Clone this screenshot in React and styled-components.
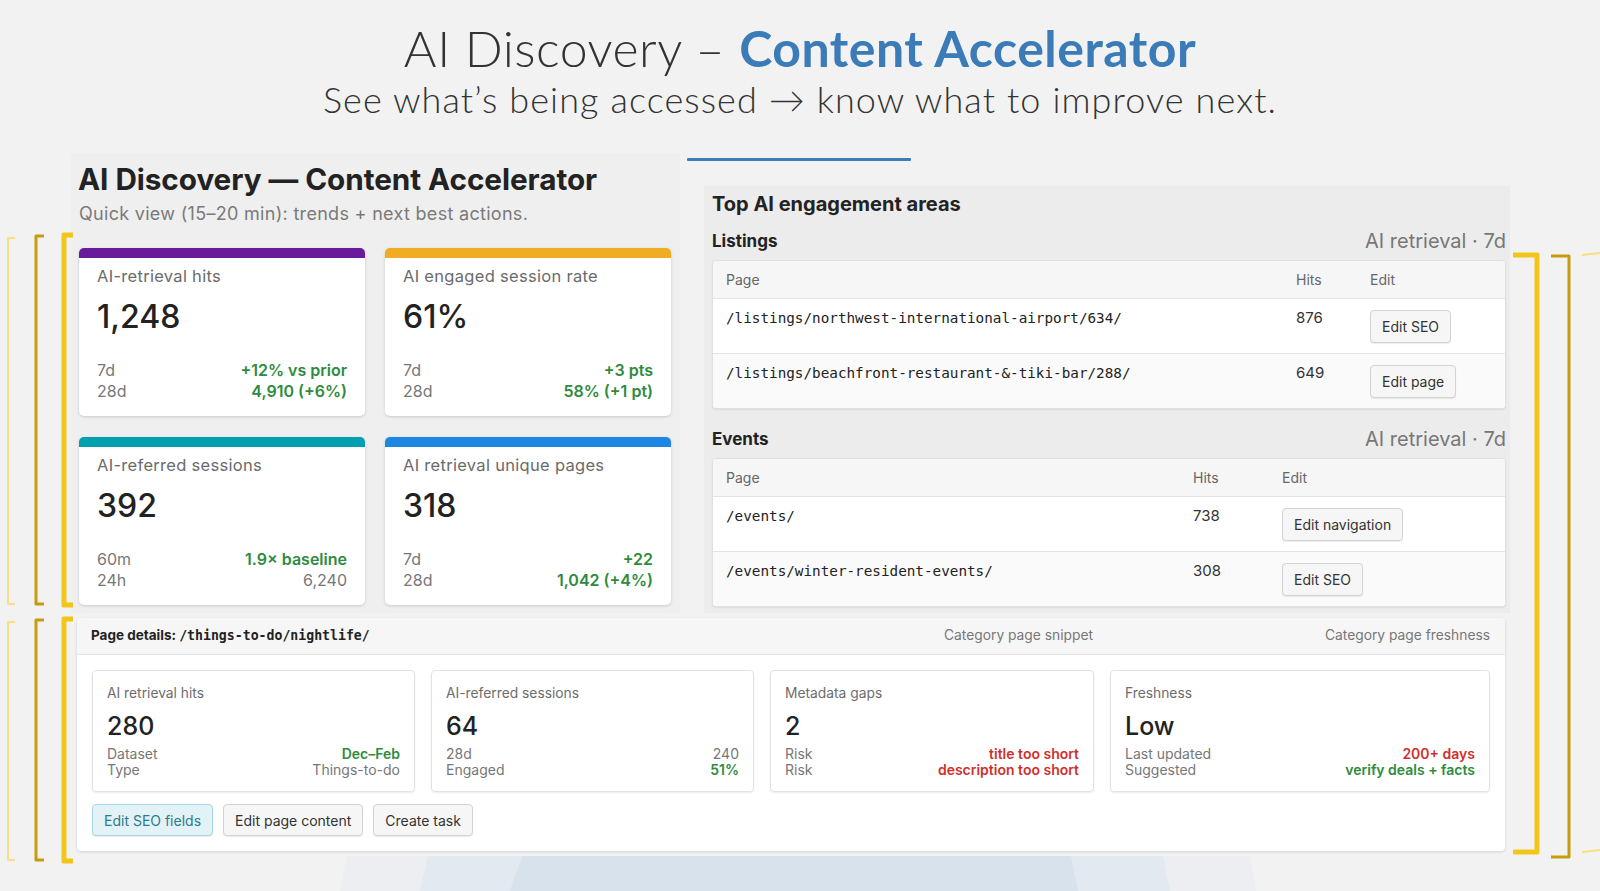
import React from "react";
import styled, { createGlobalStyle } from "styled-components";

const Global = createGlobalStyle`
  html, body { margin: 0; padding: 0; background: #f2f2f2; }
  body { font-family: Inter, "Liberation Sans", Arial, sans-serif; color: #222; }
  * { box-sizing: border-box; }
`;

const Page = styled.div`
  position: relative;
  width: 1600px;
  height: 891px;
  overflow: hidden;
  background: #f2f2f2;
`;

const Decor = styled.svg`
  position: absolute;
  left: 0;
  top: 0;
  width: 1600px;
  height: 891px;
  pointer-events: none;
  z-index: ${(p) => (p.$front ? 5 : 0)};
`;

const Header = styled.header`
  position: relative;
  z-index: 1;
  text-align: center;
  padding-top: 17px;
  height: 153px;
`;

const Title = styled.h1`
  margin: 0;
  font-family: Lato, "Liberation Sans", sans-serif;
  font-weight: 300;
  font-size: 50px;
  line-height: 62px;
  color: #333;
  letter-spacing: 0.5px;
`;

const Accent = styled.span`
  color: #3a7bb8;
  font-weight: 700;
`;

const Subtitle = styled.p`
  margin: -2px 0 0;
  font-family: Lato, "Liberation Sans", sans-serif;
  font-weight: 300;
  font-size: 36px;
  line-height: 44px;
  color: #333;
  letter-spacing: 1.1px;
`;

const Dashboard = styled.div`
  position: relative;
  z-index: 1;
  margin-left: 71px;
  width: 1439px;
  display: grid;
  grid-template-columns: 609px 823px;
  column-gap: 7px;
  row-gap: 5px;
`;

const LeftPanel = styled.section`
  background: #efefef;
  padding: 8px 9px 7px 7px;
`;

const PanelTitle = styled.h2`
  margin: 0;
  font-size: 29.7px;
  line-height: 36px;
  font-weight: 700;
  color: #222;
  letter-spacing: -0.05px;
`;

const PanelSub = styled.p`
  margin: 6px 0 0 1px;
  font-size: 18px;
  line-height: 22px;
  color: #7a7a7a;
  letter-spacing: 0.3px;
`;

const CardGrid = styled.div`
  margin: 23px 0 0 1px;
  display: grid;
  grid-template-columns: 286px 286px;
  column-gap: 20px;
  row-gap: 21px;
`;

const MetricCard = styled.div`
  height: 168px;
  background: #fff;
  border-radius: 5px;
  overflow: hidden;
  box-shadow: 0 1px 3px rgba(0, 0, 0, 0.16);
  border-top: 10px solid ${(p) => p.$color};
  padding: 8px 18px 0 18px;
`;

const MetricLabel = styled.div`
  font-size: 16.5px;
  line-height: 20px;
  color: #6b6b6b;
  letter-spacing: 0.3px;
`;

const MetricValue = styled.div`
  margin-top: 11px;
  font-size: 32px;
  line-height: 40px;
  font-weight: 500;
  color: #222;
`;

const MetricRows = styled.div`
  margin-top: 23px;
`;

const MetricRow = styled.div`
  display: flex;
  justify-content: space-between;
  font-size: 16px;
  line-height: 20.5px;
  color: #777;
`;

const Val = styled.span`
  color: ${(p) => (p.$tone === "good" ? "#2e8b3e" : p.$tone === "bad" ? "#d0302c" : "#777")};
  font-weight: ${(p) => (p.$tone ? 600 : 400)};
`;

const RightCol = styled.section`
  padding-top: 5px;
`;

const BlueRule = styled.div`
  width: 224px;
  height: 3px;
  background: #3e7cb9;
  border-radius: 1px;
`;

const RightBox = styled.div`
  margin: 25px 0 0 17px;
  background: #ececec;
  padding: 5px 4px 6px 8px;
`;

const BoxTitle = styled.h3`
  margin: 0;
  font-size: 20px;
  line-height: 26px;
  font-weight: 700;
  color: #222;
`;

const SectionHead = styled.div`
  margin-top: ${(p) => p.$mt}px;
  display: flex;
  justify-content: space-between;
  align-items: center;
  height: 22px;
`;

const SectionName = styled.span`
  font-size: 17px;
  font-weight: 700;
  color: #222;
`;

const SectionMeta = styled.span`
  font-size: 20px;
  color: #777;
`;

const Table = styled.div`
  margin-top: 8px;
  background: #fff;
  border: 1px solid #e0e0e0;
  border-radius: 4px;
  overflow: hidden;
  box-shadow: 0 1px 2px rgba(0, 0, 0, 0.07);
`;

const TRow = styled.div`
  display: grid;
  grid-template-columns: ${(p) => p.$cols};
  height: ${(p) => (p.$head ? 37 : 55)}px;
  align-items: ${(p) => (p.$head ? "center" : "start")};
  background: ${(p) => (p.$head ? "#f6f6f6" : p.$alt ? "#fafafa" : "#fff")};
  border-top: ${(p) => (p.$first ? "none" : "1px solid #e4e4e4")};
`;

const Th = styled.div`
  padding: 0 13px;
  font-size: 14px;
  color: #666;
`;

const TdPath = styled.div`
  padding: 9px 13px 0;
  font-family: "DejaVu Sans Mono", "Liberation Mono", monospace;
  font-size: 14.3px;
  line-height: 20px;
  color: #222;
`;

const TdNum = styled.div`
  padding: 9px 13px 0;
  font-size: 15px;
  line-height: 20px;
  color: #333;
`;

const TdAction = styled.div`
  padding: 11px 13px 0;
`;

const Btn = styled.button`
  font-family: Inter, "Liberation Sans", sans-serif;
  font-size: 14px;
  height: ${(p) => (p.$small ? 32 : 33)}px;
  padding: 0 11px;
  border-radius: 4px;
  border: 1px solid ${(p) => (p.$primary ? "#a9d6df" : "#d3d3d3")};
  background: ${(p) => (p.$primary ? "#e2f2f6" : "#f6f6f6")};
  color: ${(p) => (p.$primary ? "#2b7c8c" : "#333")};
  box-shadow: 0 1px 1px rgba(0, 0, 0, 0.08);
  cursor: pointer;
`;

const DetailPanel = styled.section`
  grid-column: 1 / span 2;
  margin: 0 5px 0 6px;
  background: #fff;
  border-radius: 4px;
  box-shadow: 0 1px 3px rgba(0, 0, 0, 0.14);
  overflow: hidden;
`;

const detailCols = "323px 323px 324px 1fr";

const DetailHead = styled.div`
  display: grid;
  grid-template-columns: ${detailCols};
  column-gap: 16px;
  align-items: center;
  height: 37px;
  padding: 0 15px 0 14px;
  background: #f6f6f6;
  border-bottom: 1px solid #e4e4e4;
`;

const DetailTitle = styled.div`
  grid-column: 1 / span 2;
  font-size: 13.5px;
  font-weight: 700;
  color: #222;
  padding-bottom: 2px;
`;

const Mono = styled.span`
  font-family: "DejaVu Sans Mono", "Liberation Mono", monospace;
  font-size: 13.2px;
`;

const HeadMeta = styled.div`
  text-align: right;
  font-size: 13.8px;
  color: #777;
  padding-bottom: 2px;
`;

const DetailBody = styled.div`
  padding: 15px;
`;

const DetailGrid = styled.div`
  display: grid;
  grid-template-columns: ${detailCols};
  column-gap: 16px;
`;

const DCard = styled.div`
  height: 122px;
  border: 1px solid #e2e2e2;
  border-radius: 4px;
  box-shadow: 0 1px 2px rgba(0, 0, 0, 0.08);
  padding: 13px 14px 0;
`;

const DLabel = styled.div`
  font-size: 13.8px;
  line-height: 18px;
  color: #6d6d6d;
`;

const DValue = styled.div`
  margin-top: 9px;
  font-size: 25px;
  line-height: 30px;
  font-weight: 500;
  color: #222;
`;

const DRows = styled.div`
  margin-top: 5px;
`;

const DRow = styled.div`
  display: flex;
  justify-content: space-between;
  font-size: 14px;
  line-height: 16px;
  color: #777;
`;

const Actions = styled.div`
  margin-top: 12px;
  display: flex;
  gap: 10px;
`;

const metrics = [
  { color: "#6a1b9a", label: "AI-retrieval hits", value: "1,248", rows: [["7d", "+12% vs prior", "good"], ["28d", "4,910 (+6%)", "good"]] },
  { color: "#f0ac22", label: "AI engaged session rate", value: "61%", rows: [["7d", "+3 pts", "good"], ["28d", "58% (+1 pt)", "good"]] },
  { color: "#00a0ae", label: "AI-referred sessions", value: "392", rows: [["60m", "1.9× baseline", "good"], ["24h", "6,240", null]] },
  { color: "#1e86e3", label: "AI retrieval unique pages", value: "318", rows: [["7d", "+22", "good"], ["28d", "1,042 (+4%)", "good"]] },
];

const tables = [
  {
    name: "Listings",
    mt: 13,
    cols: "570px 74px 1fr",
    rows: [
      ["/listings/northwest-international-airport/634/", "876", "Edit SEO"],
      ["/listings/beachfront-restaurant-&-tiki-bar/288/", "649", "Edit page"],
    ],
  },
  {
    name: "Events",
    mt: 19,
    cols: "467px 89px 1fr",
    rows: [
      ["/events/", "738", "Edit navigation"],
      ["/events/winter-resident-events/", "308", "Edit SEO"],
    ],
  },
];

const details = [
  { label: "AI retrieval hits", value: "280", rows: [["Dataset", "Dec–Feb", "good"], ["Type", "Things-to-do", null]] },
  { label: "AI-referred sessions", value: "64", rows: [["28d", "240", null], ["Engaged", "51%", "good"]] },
  { label: "Metadata gaps", value: "2", rows: [["Risk", "title too short", "bad"], ["Risk", "description too short", "bad"]] },
  { label: "Freshness", value: "Low", rows: [["Last updated", "200+ days", "bad"], ["Suggested", "verify deals + facts", "good"]] },
];

function Bracket({ x, y1, y2, dir, len, color, w }) {
  const hx = x + dir * len;
  return (
    <path
      d={`M${hx} ${y1} L${x} ${y1} L${x} ${y2} L${hx} ${y2}`}
      fill="none"
      stroke={color}
      strokeWidth={w}
      strokeLinejoin="round"
    />
  );
}

function BracketGroup({ y1, y2 }) {
  return (
    <g>
      <Bracket x={8} y1={y1 + 3} y2={y2} dir={1} len={7} color="#f8df82" w={2} />
      <Bracket x={36} y1={y1 + 1} y2={y2} dir={1} len={8} color="#c59c0e" w={3} />
      <Bracket x={64} y1={y1} y2={y2 + 1} dir={1} len={9} color="#f2c519" w={5} />
    </g>
  );
}

export default function App() {
  return (
    <Page>
      <Global />
      <Decor viewBox="0 0 1600 891">
        <polygon points="347,856 1250,856 1256,891 340,891" fill="#eceef1" />
        <polygon points="428,856 1163,856 1170,891 420,891" fill="#e3e9f0" />
        <polygon points="522,856 1071,856 1078,891 510,891" fill="#d7e2ed" />
      </Decor>
      <Header>
        <Title>
          AI Discovery – <Accent>Content Accelerator</Accent>
        </Title>
        <Subtitle>See what’s being accessed → know what to improve next.</Subtitle>
      </Header>
      <Dashboard>
        <LeftPanel>
          <PanelTitle>AI Discovery — Content Accelerator</PanelTitle>
          <PanelSub>Quick view (15–20 min): trends + next best actions.</PanelSub>
          <CardGrid>
            {metrics.map((m) => (
              <MetricCard key={m.label} $color={m.color}>
                <MetricLabel>{m.label}</MetricLabel>
                <MetricValue>{m.value}</MetricValue>
                <MetricRows>
                  {m.rows.map(([k, v, t]) => (
                    <MetricRow key={k}>
                      <span>{k}</span>
                      <Val $tone={t}>{v}</Val>
                    </MetricRow>
                  ))}
                </MetricRows>
              </MetricCard>
            ))}
          </CardGrid>
        </LeftPanel>
        <RightCol>
          <BlueRule />
          <RightBox>
            <BoxTitle>Top AI engagement areas</BoxTitle>
            {tables.map((t) => (
              <React.Fragment key={t.name}>
                <SectionHead $mt={t.mt}>
                  <SectionName>{t.name}</SectionName>
                  <SectionMeta>AI retrieval · 7d</SectionMeta>
                </SectionHead>
                <Table>
                  <TRow $cols={t.cols} $head $first>
                    <Th>Page</Th>
                    <Th>Hits</Th>
                    <Th>Edit</Th>
                  </TRow>
                  {t.rows.map(([p, h, a], i) => (
                    <TRow key={p} $cols={t.cols} $alt={i === 1}>
                      <TdPath>{p}</TdPath>
                      <TdNum>{h}</TdNum>
                      <TdAction>
                        <Btn>{a}</Btn>
                      </TdAction>
                    </TRow>
                  ))}
                </Table>
              </React.Fragment>
            ))}
          </RightBox>
        </RightCol>
        <DetailPanel>
          <DetailHead>
            <DetailTitle>
              Page details: <Mono>/things-to-do/nightlife/</Mono>
            </DetailTitle>
            <HeadMeta>Category page snippet</HeadMeta>
            <HeadMeta>Category page freshness</HeadMeta>
          </DetailHead>
          <DetailBody>
            <DetailGrid>
              {details.map((d) => (
                <DCard key={d.label}>
                  <DLabel>{d.label}</DLabel>
                  <DValue>{d.value}</DValue>
                  <DRows>
                    {d.rows.map(([k, v, t], i) => (
                      <DRow key={i}>
                        <span>{k}</span>
                        <Val $tone={t}>{v}</Val>
                      </DRow>
                    ))}
                  </DRows>
                </DCard>
              ))}
            </DetailGrid>
            <Actions>
              <Btn $small $primary>Edit SEO fields</Btn>
              <Btn $small>Edit page content</Btn>
              <Btn $small>Create task</Btn>
            </Actions>
          </DetailBody>
        </DetailPanel>
      </Dashboard>
      <Decor viewBox="0 0 1600 891" $front>
        <BracketGroup y1={235} y2={604} />
        <BracketGroup y1={619} y2={860} />
        <Bracket x={1537} y1={255} y2={852} dir={-1} len={24} color="#f2c519" w={5} />
        <Bracket x={1569} y1={256} y2={857} dir={-1} len={18} color="#c59c0e" w={3} />
        <path d="M1582 255 L1600 253 M1582 852 L1600 850" stroke="#f8df82" strokeWidth={2} fill="none" />
      </Decor>
    </Page>
  );
}
